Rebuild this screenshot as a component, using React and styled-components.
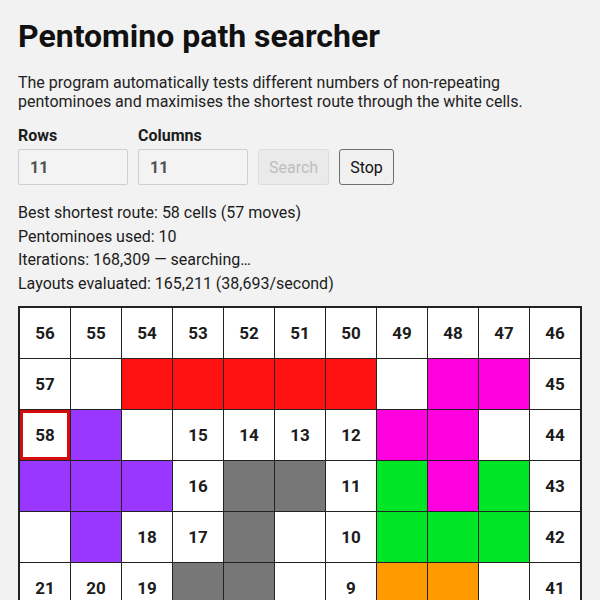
import React from "react";
import styled, { createGlobalStyle } from "styled-components";

const GlobalStyle = createGlobalStyle`
  html, body {
    margin: 0;
    padding: 0;
    background: #f2f2f2;
  }
  body {
    font-family: Roboto, "Liberation Sans", Arial, sans-serif;
    color: #1c1c1c;
  }
`;

const COLORS = {
  R: "#ff1212",
  P: "#9936ff",
  M: "#ff00de",
  G: "#00e626",
  K: "#777777",
  O: "#ff9a00",
  Y: "#ffe600",
  B: "#2f6bff",
  C: "#00d9e6",
  N: "#a0522d",
};

// "." = empty white cell, number = path step, letter = pentomino colour
const LAYOUT = [
  "56 55 54 53 52 51 50 49 48 47 46",
  "57 . R R R R R . M M 45",
  "58 P . 15 14 13 12 M M . 44",
  "P P P 16 K K 11 G M G 43",
  ". P 18 17 K . 10 G G G 42",
  "21 20 19 K K . 9 O O . 41",
  "22 Y Y Y Y . 8 O O B 40",
  "23 . Y C C C 7 O B B 39",
  "24 N N N C 5 6 B B . 38",
  "25 N . N C 4 3 2 1 . 37",
  "26 27 28 29 30 31 32 33 34 35 36",
].map((row) => row.split(" "));

const Page = styled.div`
  padding: 17px 18px 0;
`;

const Title = styled.h1`
  margin: 0 0 18px;
  font-size: 32px;
  font-weight: 700;
  line-height: 38px;
  color: #111;
`;

const Intro = styled.p`
  margin: 0 0 15px;
  font-size: 16px;
  line-height: 19px;
  color: #222;
`;

const Controls = styled.div`
  display: flex;
  align-items: flex-end;
  gap: 10px;
  margin-bottom: 16px;
`;

const Field = styled.label`
  display: flex;
  flex-direction: column;
  gap: 4px;
  font-size: 16px;
  font-weight: 700;
  color: #1c1c1c;
`;

const NumberInput = styled.input`
  box-sizing: border-box;
  width: 110px;
  height: 36px;
  padding: 0 11px;
  border: 1px solid #cfcfcf;
  border-radius: 2px;
  background: #f3f3f3;
  font-family: inherit;
  font-size: 16px;
  font-weight: 700;
  color: #505050;
`;

const Button = styled.button`
  box-sizing: border-box;
  height: 36px;
  padding: 0 10px;
  border-radius: 3px;
  font-family: inherit;
  font-size: 16px;
  border: 1px solid ${({ disabled }) => (disabled ? "#dcdcdc" : "#6e6e6e")};
  background: ${({ disabled }) => (disabled ? "#eaeaea" : "#f0f0f0")};
  color: ${({ disabled }) => (disabled ? "#bdbdbd" : "#111")};
`;

const Stats = styled.div`
  font-size: 16px;
  line-height: 23.7px;
  color: #1c1c1c;
  margin-bottom: 10px;
`;

const Board = styled.div`
  display: grid;
  grid-template-columns: repeat(11, 1fr);
  gap: 1px;
  background: #222;
  border: 2px solid #222;
`;

const Cell = styled.div`
  height: 50px;
  display: flex;
  align-items: center;
  justify-content: center;
  background: ${({ $fill }) => $fill || "#fff"};
  font-size: 17px;
  font-weight: 700;
  color: #1c1c1c;
  box-shadow: ${({ $start }) => ($start ? "inset 0 0 0 3px #d40c0c" : "none")};
`;

export default function App() {
  return (
    <Page>
      <GlobalStyle />
      <Title>Pentomino path searcher</Title>
      <Intro>
        The program automatically tests different numbers of non-repeating
        pentominoes and maximises the shortest route through the white cells.
      </Intro>
      <Controls>
        <Field>
          Rows
          <NumberInput type="number" defaultValue={11} />
        </Field>
        <Field>
          Columns
          <NumberInput type="number" defaultValue={11} />
        </Field>
        <Button disabled>Search</Button>
        <Button>Stop</Button>
      </Controls>
      <Stats>
        <div>Best shortest route: 58 cells (57 moves)</div>
        <div>Pentominoes used: 10</div>
        <div>Iterations: 168,309 — searching…</div>
        <div>Layouts evaluated: 165,211 (38,693/second)</div>
      </Stats>
      <Board>
        {LAYOUT.flatMap((row, r) =>
          row.map((v, c) => {
            const isNum = /^\d+$/.test(v);
            return (
              <Cell key={`${r}-${c}`} $fill={COLORS[v]} $start={v === "58"}>
                {isNum ? v : ""}
              </Cell>
            );
          })
        )}
      </Board>
    </Page>
  );
}
